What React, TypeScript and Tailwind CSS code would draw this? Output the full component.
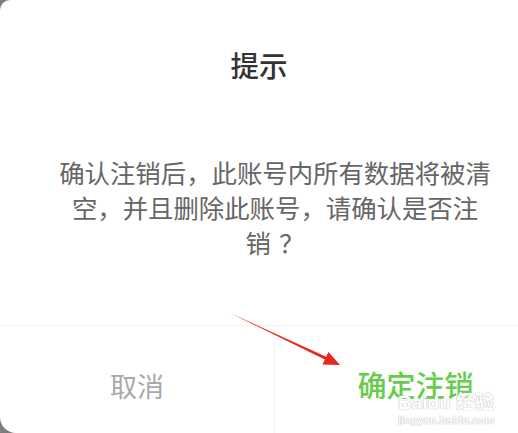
export default function App() {
  return (
    <div
      lang="zh-CN"
      className="relative w-[518px] h-[433px] overflow-hidden bg-[#7d7d7d]"
      style={{ fontFamily: '"Noto Sans CJK SC", "Noto Sans", sans-serif' }}
    >
      <div className="flex flex-col h-full bg-white rounded-tl-[10px] rounded-bl-[16px]">
        <h1 className="pt-[45px] text-center text-[28.5px] leading-[40px] font-medium text-[#333333]">
          提示
        </h1>

        <p className="mt-[70px] ml-[52px] w-[446px] text-center text-[25.4px] leading-[35px] text-[#666666]">
          确认注销后，此账号内所有数据将被清空，并且删除此账号，请确认是否注
          <span className="whitespace-nowrap">
            销<span className="inline-block pl-[8px]">？</span>
          </span>
        </p>

        <div className="mt-auto h-[108px] border-t border-[#f0f0f0] grid grid-cols-[275px_1fr]">
          <button className="pt-[40px] pb-[28px] text-[27px] leading-[40px] text-[#a9a9a9] border-r border-[#f0f0f0]">
            取消
          </button>
          <button className="pt-[38px] pb-[30px] pl-[38px] text-[29px] leading-[40px] font-medium text-[#66cc4c]">
            确定注销
          </button>
        </div>
      </div>

      {/* red annotation arrow */}
      <svg className="absolute left-0 top-0" width="518" height="433">
        <polygon
          points="230,313 326.1,356.8 328.5,351.9 340,365 322.5,364.5 324.9,359.6"
          fill="#e8261c"
        />
      </svg>

      {/* watermark */}
      <div className="absolute left-[398px] top-[392px] flex flex-col items-start text-white [text-shadow:0_0_1px_#b8b8b8,0_0_1px_#b8b8b8]">
        <span className="text-[19px] leading-[21px] font-bold" style={{ fontFamily: '"Liberation Sans", "Noto Sans CJK SC", sans-serif' }}>
          Baidu 经验
        </span>
        <span className="text-[11px] leading-[14px] font-bold" style={{ fontFamily: '"Liberation Sans", sans-serif' }}>
          jingyan.baidu.com
        </span>
      </div>
    </div>
  );
}
